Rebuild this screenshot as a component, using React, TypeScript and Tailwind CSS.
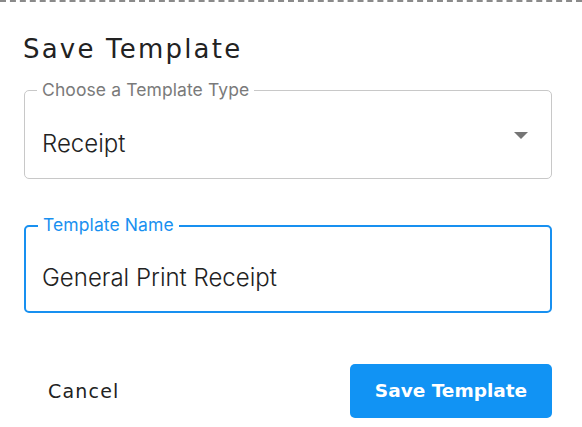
import React from "react";

export default function App() {
  return (
    <div className="w-[582px] h-[427px] bg-white relative overflow-hidden">
      <div className="h-0 border-t-2 border-dashed border-[#8a8a8a]" />
      <div className="pl-6 w-[552px]">
        <h1 className="mt-[30px] -ml-[1px] text-[26px] leading-[34px] tracking-[2.2px] text-[#222] font-['DejaVu_Sans',sans-serif] font-normal">
          Save Template
        </h1>

        <div className="relative mt-[24px] h-[89px] border border-[#c8c8c8] rounded-[5px]">
          <span className="absolute left-[12px] -top-[12px] px-[5px] bg-white text-[17.5px] leading-[22px] tracking-[0.1px] text-[#7a7a7a] font-['Inter',sans-serif]">
            Choose a Template Type
          </span>
          <div className="flex items-center h-full pl-[17px] pr-[23px] pt-[18px]">
            <span className="flex-1 text-[24px] text-[#222] font-['Inter',sans-serif] font-light">Receipt</span>
            <svg width="14" height="7" viewBox="0 0 14 7" className="-mt-[16px]">
              <path d="M0 0 L14 0 L7 7 Z" fill="#757575" />
            </svg>
          </div>
        </div>

        <div className="relative mt-[46px] h-[88px] border-2 border-[#1890f0] rounded-[5px]">
          <span className="absolute left-[12px] -top-[13px] px-[5px] bg-white text-[17.5px] leading-[22px] tracking-[0.1px] text-[#1890f0] font-['Inter',sans-serif]">
            Template Name
          </span>
          <div className="flex items-center h-full pl-[16px] pt-[17px]">
            <span className="text-[24px] text-[#222] font-['Inter',sans-serif] font-light">General Print Receipt</span>
          </div>
        </div>

        <div className="mt-[51px] flex items-center justify-between">
          <button className="ml-[24px] text-[19px] tracking-[1.2px] text-[#222] font-['DejaVu_Sans',sans-serif] font-normal">Cancel</button>
          <button className="w-[202px] h-[54px] rounded-[5px] bg-[#1193f4] text-white text-[18.5px] font-['DejaVu_Sans',sans-serif] font-bold">
            Save Template
          </button>
        </div>
      </div>
    </div>
  );
}
